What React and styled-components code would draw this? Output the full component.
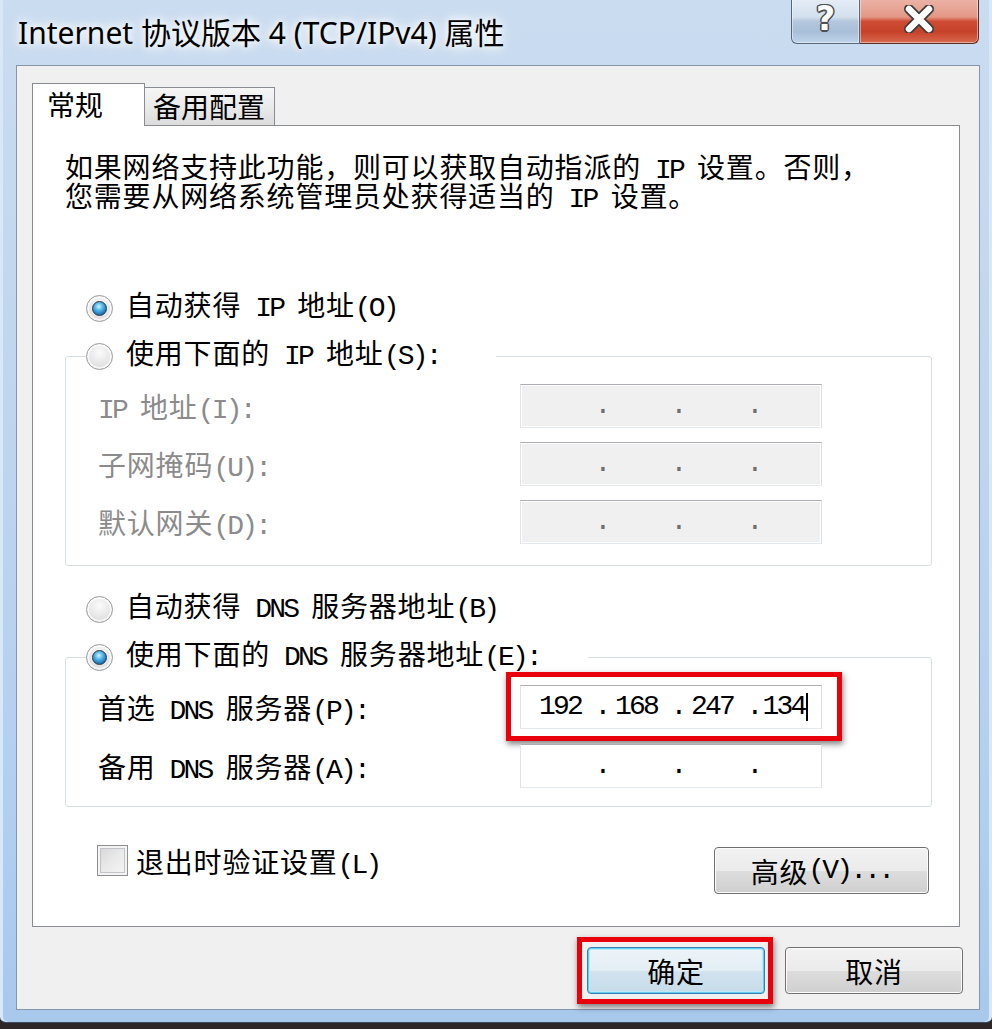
import React from "react";
import styled, { createGlobalStyle } from "styled-components";

const UI_FONT = `"Liberation Mono", "Noto Sans CJK SC", monospace`;

const GlobalStyle = createGlobalStyle`
  html, body {
    margin: 0;
    padding: 0;
    background: #2e2628;
  }
  body {
    width: 992px;
    height: 1029px;
    overflow: hidden;
  }
`;

const Window = styled.div`
  width: 992px;
  height: 1023px;
  box-sizing: border-box;
  padding: 0 12px 12px 16px;
  display: flex;
  flex-direction: column;
  background: linear-gradient(180deg, #cadcf0 0%, #bed5ee 45%, #b3d0ef 75%, #a8c8ec 100%);
  border-bottom: 1px solid #3a4b60;
  border-radius: 0 0 6px 6px;
  box-shadow: inset 3px 0 0 #d9e8f7, inset -3px 0 0 #d9e8f7;
  font-family: ${UI_FONT};
  color: #000;
`;

const TitleBar = styled.div`
  height: 65px;
  display: flex;
  align-items: flex-start;
  justify-content: space-between;
  padding-left: 2px;
`;

const Title = styled.div`
  margin-top: 17px;
  font-family: "Noto Sans", "Noto Sans CJK SC", sans-serif;
  font-size: 30px;
  line-height: 32px;
  color: #000;
  white-space: nowrap;
  text-shadow: 0 0 6px #fff, 0 0 12px #fff, 0 0 18px rgba(255, 255, 255, 0.9);
`;

const CaptionGroup = styled.div`
  display: flex;
  margin-top: -2px;
  margin-right: 1px;
`;

const CaptionButton = styled.div`
  height: 46px;
  box-sizing: border-box;
  display: flex;
  align-items: center;
  justify-content: center;
  padding-bottom: 4px;
  border: 1px solid ${(p) => (p.$close ? "#5b2c24" : "#56667b")};
  border-top: none;
  width: ${(p) => (p.$close ? "119px" : "69px")};
  border-radius: ${(p) => (p.$close ? "0 0 6px 0" : "0 0 0 6px")};
  border-left-width: ${(p) => (p.$close ? "0" : "1px")};
  background: ${(p) =>
    p.$close
      ? "linear-gradient(180deg, #ecb4a8 0%, #e49886 42%, #cf4c34 52%, #c6412a 75%, #d86a4d 100%)"
      : "linear-gradient(180deg, #e6edf6 0%, #d3e0ee 42%, #b4c7dd 52%, #a9bfd8 75%, #bed4ea 100%)"};
  box-shadow: inset 0 0 0 1px rgba(255, 255, 255, 0.45);
`;

const HelpGlyph = styled.span`
  font-family: "DejaVu Sans", sans-serif;
  font-weight: bold;
  font-size: 33px;
  line-height: 1;
  color: #fff;
  text-shadow: 1.5px 0 0 #505050, -1.5px 0 0 #505050, 0 1.5px 0 #505050, 0 -1.5px 0 #505050,
    1px 1px 0 #505050, -1px -1px 0 #505050, 1px -1px 0 #505050, -1px 1px 0 #505050;
`;

const Client = styled.div`
  flex: 1;
  box-sizing: border-box;
  border: 1px solid #8596ab;
  background: #f0f0f0;
  padding: 17px 19px 0 15px;
  display: flex;
  flex-direction: column;
`;

const TabStrip = styled.div`
  display: flex;
  align-items: flex-end;
  height: 43px;
  margin-bottom: -1px;
  position: relative;
  z-index: 1;
`;

const Tab = styled.div`
  box-sizing: border-box;
  font-family: "Noto Sans CJK SC", sans-serif;
  font-size: 28px;
  border: 1px solid #898c95;
  border-bottom: none;
  width: ${(p) => (p.$active ? "113px" : "130px")};
  height: ${(p) => (p.$active ? "43px" : "38px")};
  line-height: ${(p) => (p.$active ? "40px" : "36px")};
  padding-left: ${(p) => (p.$active ? "14px" : "8px")};
  margin-bottom: ${(p) => (p.$active ? "0" : "1px")};
  border-left-width: ${(p) => (p.$active ? "1px" : "0")};
  background: ${(p) => (p.$active ? "#fff" : "linear-gradient(180deg, #f6f6f6 0%, #e9e9e9 55%, #dcdcdc 100%)")};
`;

const Panel = styled.div`
  height: 802px;
  box-sizing: border-box;
  border: 1px solid #898c95;
  background: #fff;
  padding: 30px 0 0 32px;
  display: flex;
  flex-direction: column;
  font-size: 28px;
  letter-spacing: 0.8px;
`;

const Latin = styled.span`
  letter-spacing: -0.1em;
`;

const mixed = (text) =>
  text
    .split(/([\u0020-\u007e]+)/)
    .filter(Boolean)
    .map((part, i) =>
      /^[\u0020-\u007e]+$/.test(part) ? <Latin key={i}>{part}</Latin> : <React.Fragment key={i}>{part}</React.Fragment>
    );

const Description = styled.div`
  line-height: 29px;
  white-space: nowrap;
`;

const RadioRow = styled.div`
  display: flex;
  align-items: center;
  gap: 13px;
  height: 29px;
  line-height: 29px;
  white-space: nowrap;
  margin: ${(p) => p.$margin || "0"};
`;

const Legend = styled(RadioRow)`
  width: fit-content;
  background: #fff;
  margin: -15px 0 0 20px;
  padding-right: ${(p) => p.$gap || "58px"};
`;

const RadioCircle = styled.span`
  position: relative;
  flex: none;
  width: 27px;
  height: 27px;
  box-sizing: border-box;
  border-radius: 50%;
  border: 1px solid #9a9b9d;
  background: radial-gradient(circle at 50% 35%, #fbfbfb 0%, #e6e6e6 55%, #cfcfcf 100%);
  box-shadow: inset 0 0 0 2px rgba(255, 255, 255, 0.7);

  &::after {
    content: "";
    display: ${(p) => (p.$checked ? "block" : "none")};
    position: absolute;
    left: 5px;
    top: 5px;
    width: 15px;
    height: 15px;
    box-sizing: border-box;
    border-radius: 50%;
    border: 1.5px solid #2a3540;
    background: radial-gradient(circle at 45% 35%, #d5f2ff 0%, #55b7e8 35%, #1d78b8 70%, #0c4e80 100%);
  }
`;

const GroupBox = styled.div`
  width: 867px;
  box-sizing: border-box;
  border: 1px solid #d5dfe5;
  border-radius: 3px;
  margin-top: 33px;
`;

const FieldList = styled.div`
  display: flex;
  flex-direction: column;
  gap: ${(p) => p.$gap || "14px"};
  padding: ${(p) => p.$pad || "13px 0 21px 32px"};
`;

const FieldRow = styled.div`
  display: grid;
  grid-template-columns: 422px 302px;
  align-items: center;
  height: 44px;
`;

const FieldLabel = styled.span`
  white-space: nowrap;
  color: ${(p) => (p.$disabled ? "#8b8b8b" : "#000")};
`;

const IpBox = styled.div`
  position: relative;
  display: grid;
  grid-template-columns: 78px 8px 68px 8px 68px 8px 1fr;
  align-items: center;
  width: 302px;
  height: 44px;
  box-sizing: border-box;
  border: 1px solid;
  border-color: #abadb3 #dbdfe6 #e3e9ef #e2e3ea;
  background: ${(p) => (p.$disabled ? "#f0f0f0" : "#fff")};
  box-shadow: inset 0 0 0 1px #fff;
  color: ${(p) => (p.$disabled ? "#6f6f6f" : "#000")};
  line-height: 30px;
  letter-spacing: 0;
`;

const IpPart = styled.span`
  text-align: center;
  white-space: nowrap;
  padding-right: ${(p) => (p.$shift ? "10px" : "0")};
`;

const IpDot = styled.span`
  display: flex;
  justify-content: center;
`;

const Caret = styled.span`
  display: inline-block;
  width: 0;
  height: 28px;
  border-left: 2px solid #000;
  vertical-align: middle;
  margin-left: 1px;
`;

const Highlight = styled.span`
  position: absolute;
  inset: ${(p) => p.$inset};
  border: 5px solid #e8000b;
  box-shadow: 1px 3px 6px rgba(0, 0, 0, 0.5);
  pointer-events: none;
`;

const BottomRow = styled.div`
  display: flex;
  align-items: flex-start;
  margin-top: 40px;
`;

const CheckRow = styled.div`
  display: flex;
  align-items: center;
  gap: 8px;
  height: 31px;
  margin: -2px 0 0 32px;
  white-space: nowrap;
`;

const CheckBox = styled.span`
  flex: none;
  width: 31px;
  height: 31px;
  box-sizing: border-box;
  border: 1px solid #8f8f8f;
  background: linear-gradient(135deg, #d4d4d4 0%, #e9e9e9 50%, #f7f7f7 100%);
  box-shadow: inset 0 0 0 2px #f4f4f4, inset 0 0 0 3px #c0c3c7;
`;

const Button = styled.div`
  position: relative;
  box-sizing: border-box;
  width: ${(p) => p.$width || "178px"};
  height: 47px;
  display: flex;
  align-items: center;
  justify-content: center;
  white-space: nowrap;
  font-size: 28px;
  letter-spacing: 0.8px;
  border-radius: 4px;
  border: 1px solid ${(p) => (p.$default ? "#3c7fb1" : "#707070")};
  background: ${(p) =>
    p.$default
      ? "linear-gradient(180deg, #edf4f8 0%, #e3eef5 50%, #d2e3ee 51%, #c6dbe9 100%)"
      : "linear-gradient(180deg, #f2f2f2 0%, #ebebeb 50%, #dddddd 51%, #cfcfcf 100%)"};
  box-shadow: ${(p) =>
    p.$default ? "inset 0 0 0 1px #5fcdf4, inset 0 0 0 2px #bde9f9" : "inset 0 0 0 1px #fcfcfc"};
  margin: ${(p) => p.$margin || "0"};
`;

const ButtonRow = styled.div`
  display: flex;
  justify-content: flex-end;
  gap: 20px;
  margin: 20px -3px 0 0;
`;

function IpAddress({ value, disabled, focused }) {
  const parts = value || ["", "", "", ""];
  return (
    <IpBox $disabled={disabled}>
      {parts.map((p, i) => (
        <React.Fragment key={i}>
          {i > 0 && <IpDot>.</IpDot>}
          <IpPart $shift={i > 0 && p !== ""}>
            {mixed(p)}
            {focused && i === 3 && <Caret />}
          </IpPart>
        </React.Fragment>
      ))}
      {focused && <Highlight $inset="-14px -21px -13px -15px" />}
    </IpBox>
  );
}

const ipFields = ["IP 地址(I):", "子网掩码(U):", "默认网关(D):"];

const dnsFields = [
  { label: "首选 DNS 服务器(P):", value: ["192", "168", "247", "134"], focused: true },
  { label: "备用 DNS 服务器(A):" },
];

export default function App() {
  return (
    <>
      <GlobalStyle />
      <Window>
        <TitleBar>
          <Title>Internet 协议版本 4 (TCP/IPv4) 属性</Title>
          <CaptionGroup>
            <CaptionButton>
              <HelpGlyph>?</HelpGlyph>
            </CaptionButton>
            <CaptionButton $close>
              <svg width="32" height="28" viewBox="0 0 32 28">
                <path d="M6 4 L26 24 M26 4 L6 24" stroke="#3d3d3d" strokeWidth="10" strokeLinecap="round" />
                <path d="M6 4 L26 24 M26 4 L6 24" stroke="#fff" strokeWidth="6.5" strokeLinecap="round" />
              </svg>
            </CaptionButton>
          </CaptionGroup>
        </TitleBar>

        <Client>
          <TabStrip>
            <Tab $active>常规</Tab>
            <Tab>备用配置</Tab>
          </TabStrip>

          <Panel>
            <Description>
              <div>{mixed("如果网络支持此功能，则可以获取自动指派的 IP 设置。否则，")}</div>
              <div>{mixed("您需要从网络系统管理员处获得适当的 IP 设置。")}</div>
            </Description>

            <RadioRow $margin="80px 0 0 21px">
              <RadioCircle $checked />
              <span>{mixed("自动获得 IP 地址(O)")}</span>
            </RadioRow>

            <GroupBox>
              <Legend $gap="56px">
                <RadioCircle />
                <span>{mixed("使用下面的 IP 地址(S):")}</span>
              </Legend>
              <FieldList>
                {ipFields.map((label) => (
                  <FieldRow key={label}>
                    <FieldLabel $disabled>{mixed(label)}</FieldLabel>
                    <IpAddress disabled />
                  </FieldRow>
                ))}
              </FieldList>
            </GroupBox>

            <RadioRow $margin="29px 0 0 21px">
              <RadioCircle />
              <span>{mixed("自动获得 DNS 服务器地址(B)")}</span>
            </RadioRow>

            <GroupBox>
              <Legend $gap="48px">
                <RadioCircle $checked />
                <span>{mixed("使用下面的 DNS 服务器地址(E):")}</span>
              </Legend>
              <FieldList $gap="15px" $pad="13px 0 18px 32px">
                {dnsFields.map((f) => (
                  <FieldRow key={f.label}>
                    <FieldLabel>{mixed(f.label)}</FieldLabel>
                    <IpAddress value={f.value} focused={f.focused} />
                  </FieldRow>
                ))}
              </FieldList>
            </GroupBox>

            <BottomRow>
              <CheckRow>
                <CheckBox />
                <span>{mixed("退出时验证设置(L)")}</span>
              </CheckRow>
              <Button $width="215px" $margin="0 30px 0 auto">
                {mixed("高级(V)...")}
              </Button>
            </BottomRow>
          </Panel>

          <ButtonRow>
            <Button $default>
              确定
              <Highlight $inset="-11px -9px -11px -11px" />
            </Button>
            <Button>取消</Button>
          </ButtonRow>
        </Client>
      </Window>
    </>
  );
}
